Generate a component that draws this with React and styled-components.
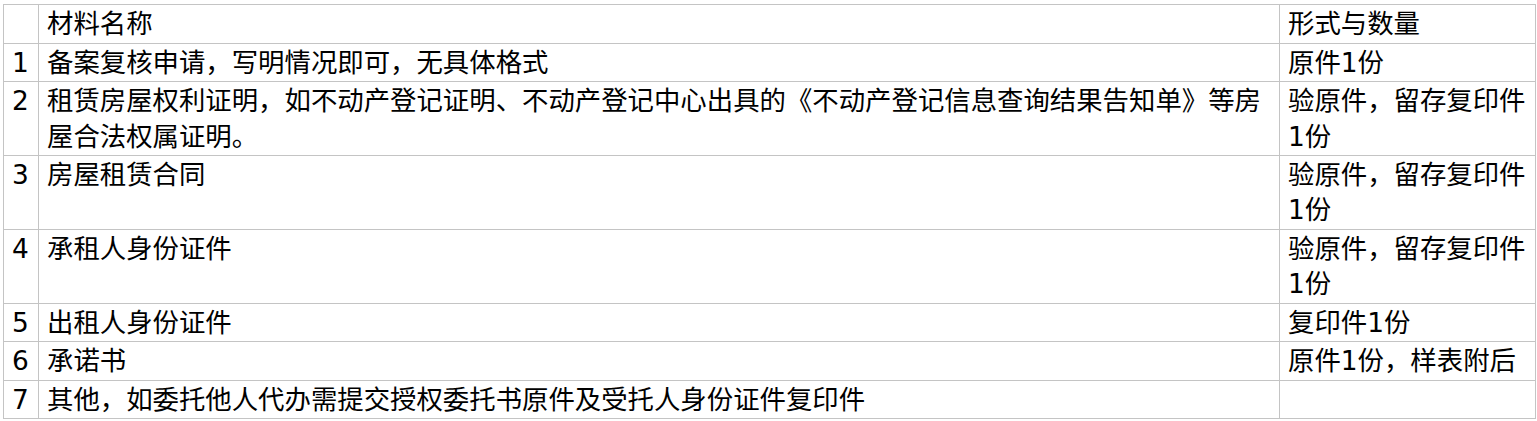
import React from 'react'
import styled, { createGlobalStyle } from 'styled-components'

const GlobalStyle = createGlobalStyle`
  html, body {
    margin: 0;
    padding: 0;
    background: #fff;
  }
`

const Page = styled.div`
  padding: 4px 2px 0 3px;
  font-family: "DejaVu Sans", "Noto Sans CJK SC", sans-serif;
  color: #000;
`

const Table = styled.table`
  width: 1532px;
  table-layout: fixed;
  border-collapse: collapse;
  font-size: 26.4px;
  line-height: 35.2px;
`

const Cell = styled.td`
  border: 1px solid #c4c4c4;
  padding: 1.2px 4px 1.2px 8px;
  vertical-align: top;
  text-align: left;
  word-break: break-all;
`

const materials = [
  { name: '备案复核申请，写明情况即可，无具体格式', form: '原件1份' },
  {
    name: '租赁房屋权利证明，如不动产登记证明、不动产登记中心出具的《不动产登记信息查询结果告知单》等房屋合法权属证明。',
    form: '验原件，留存复印件1份'
  },
  { name: '房屋租赁合同', form: '验原件，留存复印件1份' },
  { name: '承租人身份证件', form: '验原件，留存复印件1份' },
  { name: '出租人身份证件', form: '复印件1份' },
  { name: '承诺书', form: '原件1份，样表附后' },
  { name: '其他，如委托他人代办需提交授权委托书原件及受托人身份证件复印件', form: '' }
]

export default function App () {
  return (
    <Page>
      <GlobalStyle />
      <Table>
        <colgroup>
          <col style={{ width: 35 }} />
          <col style={{ width: 1241 }} />
          <col style={{ width: 256 }} />
        </colgroup>
        <tbody>
          <tr>
            <Cell />
            <Cell>材料名称</Cell>
            <Cell>形式与数量</Cell>
          </tr>
          {materials.map((m, i) => (
            <tr key={i}>
              <Cell>{i + 1}</Cell>
              <Cell>{m.name}</Cell>
              <Cell>{m.form}</Cell>
            </tr>
          ))}
        </tbody>
      </Table>
    </Page>
  )
}
